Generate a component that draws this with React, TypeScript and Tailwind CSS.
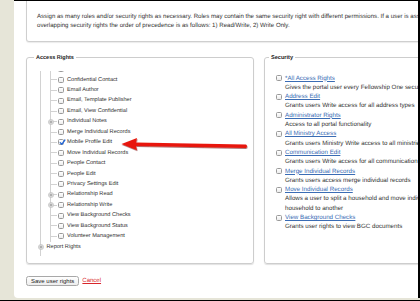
import React from 'react';

const accessRows: { label: string; expander?: boolean; checked?: boolean }[] = [
  { label: '' },
  { label: 'Confidential Contact' },
  { label: 'Email Author' },
  { label: 'Email, Template Publisher' },
  { label: 'Email, View Confidential' },
  { label: 'Individual Notes', expander: true },
  { label: 'Merge Individual Records' },
  { label: 'Mobile Profile Edit', checked: true },
  { label: 'Move Individual Records' },
  { label: 'People Contact' },
  { label: 'People Edit' },
  { label: 'Privacy Settings Edit' },
  { label: 'Relationship Read', expander: true },
  { label: 'Relationship Write', expander: true },
  { label: 'View Background Checks' },
  { label: 'View Background Status' },
  { label: 'Volunteer Management' },
];

const securityRows: { label: string; desc: string[] }[] = [
  { label: '*All Access Rights', desc: ['Gives the portal user every Fellowship One security right'] },
  { label: 'Address Edit', desc: ['Grants users Write access for all address types'] },
  { label: 'Administrator Rights', desc: ['Access to all portal functionality'] },
  { label: 'All Ministry Access', desc: ['Grants users Ministry Write access to all ministries'] },
  { label: 'Communication Edit', desc: ['Grants users Write access for all communication types'] },
  { label: 'Merge Individual Records', desc: ['Grants users access merge individual records'] },
  { label: 'Move Individual Records', desc: ['Allows a user to split a household and move individuals from one', 'household to another'] },
  { label: 'View Background Checks', desc: ['Grants user rights to view BGC documents'] },
];

function Box({ checked }: { checked?: boolean }) {
  return (
    <span className="relative w-[6px] h-[6px] shrink-0 rounded-[1.5px] border-[0.6px] border-[#9a9a9a] bg-gradient-to-b from-white to-[#ececec]">
      {checked && (
        <svg className="absolute left-[-0.5px] top-[-1.5px]" width="7" height="7" viewBox="0 0 7 7">
          <path d="M1.2 3.6 L2.8 5.3 L5.9 1" fill="none" stroke="#2467d8" strokeWidth="1.3" strokeLinecap="round" strokeLinejoin="round" />
        </svg>
      )}
    </span>
  );
}

function Expander() {
  return (
    <svg width="6" height="6" viewBox="0 0 6 6" className="shrink-0">
      <circle cx="3" cy="3" r="2.6" fill="#e4e4e4" stroke="#b3b3b3" strokeWidth="0.5" />
      <path d="M1.6 3 H4.4 M3 1.6 V4.4" stroke="#8a8a8a" strokeWidth="0.7" />
    </svg>
  );
}

export default function App() {
  return (
    <div
      className="relative w-[420px] h-[301px] overflow-hidden flex bg-[#e6e5d8] border-b border-black text-[#333] text-[5.75px] leading-[8.5px] [text-rendering:geometricPrecision]"
      style={{ fontFamily: '"Liberation Sans", Arial, sans-serif' }}
    >
      <div className="w-[14px] shrink-0" />
      <div className="flex-1 flex flex-col bg-white border-t border-black border-r-2 mb-[2px] rounded-bl-[4px] overflow-hidden pl-[12px]">
        {/* intro box */}
        <div className="h-[41px] -mr-[40px] border-x border-b border-[#cfcfcf] rounded-b-[3px] shadow-[0_1px_1px_rgba(0,0,0,0.08)] pl-[10px] pt-[12px] text-[6.1px] whitespace-nowrap">
          <div>Assign as many roles and/or security rights as necessary. Roles may contain the same security right with different permissions. If a user is assigned multiple roles with</div>
          <div>overlapping security rights the order of precedence is as follows: 1) Read/Write, 2) Write Only.</div>
        </div>

        <div className="flex gap-[10px] mt-[15px]">
          {/* Access Rights */}
          <div className="relative w-[228px] h-[207px] shrink-0 border border-[#cdcdcd] rounded-[3px] shadow-[0_1px_1px_rgba(0,0,0,0.12)]">
            <span className="absolute -top-[4.5px] left-[7px] bg-white px-[2px] font-bold text-[5.5px] leading-[8px] text-[#222]">Access Rights</span>
            <div className="relative mt-[13px] h-[185px] overflow-hidden text-[5.6px]">
              <div className="absolute left-[13px] top-0 bottom-0 w-px bg-[#d2d2d2]" />
              <div className="absolute left-[23px] top-0 h-[171px] w-px bg-[#d2d2d2]" />
              <div className="mt-[-6.8px]">
                {accessRows.map((r, i) => (
                  <div key={i} className="relative flex items-center h-[10.45px]">
                    <div className="absolute left-[23px] w-[7px] h-px bg-[#d2d2d2]" />
                    {r.expander && (
                      <div className="absolute left-[20.5px]">
                        <Expander />
                      </div>
                    )}
                    <div className="ml-[31px] flex items-center gap-[3px] relative whitespace-nowrap">
                      <Box checked={r.checked} />
                      {r.label && <span>{r.label}</span>}
                    </div>
                  </div>
                ))}
                <div className="relative flex items-center h-[10.45px]">
                  <div className="ml-[10.5px] flex items-center gap-[2px] relative">
                    <Expander />
                    <span className="ml-[1px]">Report Rights</span>
                  </div>
                </div>
                <div className="h-[10.45px]" />
              </div>
            </div>
          </div>

          {/* Security */}
          <div className="relative w-[220px] h-[207px] shrink-0 border border-[#cdcdcd] rounded-[3px] shadow-[0_1px_1px_rgba(0,0,0,0.12)]">
            <span className="absolute -top-[4.5px] left-[4px] bg-white px-[2px] font-bold text-[5.6px] leading-[8px] text-[#222]">Security</span>
            <div className="pt-[15.6px] pl-[11px] text-[6.2px] leading-[9.3px] whitespace-nowrap">
              {securityRows.map((s) => (
                <div key={s.label}>
                  <div className="flex items-center gap-[3px]">
                    <Box />
                    <span className="text-[#3a6cb4] underline decoration-[0.5px] underline-offset-[1px]">{s.label}</span>
                  </div>
                  {s.desc.map((d) => (
                    <div key={d} className="pl-[9px]">{d}</div>
                  ))}
                </div>
              ))}
            </div>
          </div>
        </div>

        <div className="flex items-center gap-[3px] mt-[12px]">
          <button className="h-[10px] px-[4px] rounded-[2.5px] border-[0.6px] border-[#a8a8a8] bg-gradient-to-b from-white to-[#ededed] text-[6px] leading-[8px] text-[#222]">
            Save user rights
          </button>
          <span className="text-[6px] text-[#d8262a] underline decoration-[0.5px] underline-offset-[1px]">Cancel</span>
        </div>
      </div>

      {/* red arrow callout */}
      <svg className="absolute left-0 top-0 pointer-events-none" width="420" height="301" viewBox="0 0 420 301">
        <defs>
          <filter id="sh" x="-10%" y="-50%" width="120%" height="200%">
            <feDropShadow dx="0.5" dy="1" stdDeviation="0.7" floodColor="#6b0000" floodOpacity="0.55" />
          </filter>
        </defs>
        <path
          d="M121.5 144 L137 138 L136 142.4 L246 144.4 Q248 146.1 246 147.9 L136 145.9 L137 150.2 Z"
          fill="#e8190f"
          filter="url(#sh)"
        />
      </svg>
    </div>
  );
}
